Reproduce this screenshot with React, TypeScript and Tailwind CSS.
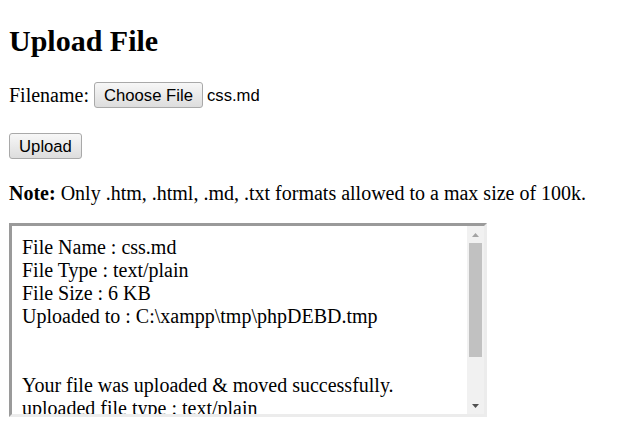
const serif = "font-['Liberation_Serif','Times_New_Roman',serif]";
const sans = "font-['Liberation_Sans',Arial,sans-serif]";

const lines = [
  "File Name : css.md",
  "File Type : text/plain",
  "File Size : 6 KB",
  "Uploaded to : C:\\xampp\\tmp\\phpDEBD.tmp",
  "",
  "",
  "Your file was uploaded & moved successfully.",
  "uploaded file type : text/plain",
  "",
  "",
];

function FakeButton({ label, width }: { label: string; width: string }) {
  return (
    <div
      className={`${sans} ${width} h-[26px] flex items-center justify-center text-[16.67px] text-black rounded-[3px] border border-[#a9a9a9] bg-gradient-to-b from-[#f7f7f7] to-[#dddddd]`}
    >
      {label}
    </div>
  );
}

function ScrollBar() {
  return (
    <div className="w-[17px] shrink-0 bg-[#f1f1f1] flex flex-col">
      <div className="h-[17px] flex items-center justify-center">
        <svg width="7" height="4" viewBox="0 0 7 4">
          <path d="M0 4 L3.5 0 L7 4 Z" fill="#a3a3a3" />
        </svg>
      </div>
      <div className="px-[2px]">
        <div className="h-[114px] bg-[#c1c1c1]" />
      </div>
      <div className="flex-1" />
      <div className="h-[17px] flex items-center justify-center">
        <svg width="7" height="4" viewBox="0 0 7 4">
          <path d="M0 0 L3.5 4 L7 0 Z" fill="#505050" />
        </svg>
      </div>
    </div>
  );
}

export default function App() {
  return (
    <div className={`${serif} text-black bg-white w-[627px] h-[445px] overflow-hidden px-[9px] text-[20px]`}>
      <h1 className="mt-[23px] text-[30px] leading-[35px] font-bold">Upload File</h1>

      <div className="flex items-center h-[30px] mt-[22px]">
        <span className="mr-[5px]">Filename:</span>
        <FakeButton label="Choose File" width="w-[109px]" />
        <span className={`${sans} text-[16.67px] ml-[4px]`}>css.md</span>
      </div>

      <div className="mt-[23px]">
        <FakeButton label="Upload" width="w-[73px]" />
      </div>

      <p className="mt-[23px] leading-[23px]">
        <b>Note:</b> Only .htm, .html, .md, .txt formats allowed to a max size of 100k.
      </p>

      <div className="mt-[18px] w-[478px] h-[194px] flex border-[3px] border-t-[#9a9a9a] border-l-[#9a9a9a] border-b-[#ececec] border-r-[#ececec]">
        <div className="flex-1 overflow-hidden pl-[10px] pt-[10px] leading-[23px]">
          {lines.map((l, i) => (
            <div key={i} className="h-[23px] whitespace-pre">
              {l}
            </div>
          ))}
        </div>
        <ScrollBar />
      </div>
    </div>
  );
}
